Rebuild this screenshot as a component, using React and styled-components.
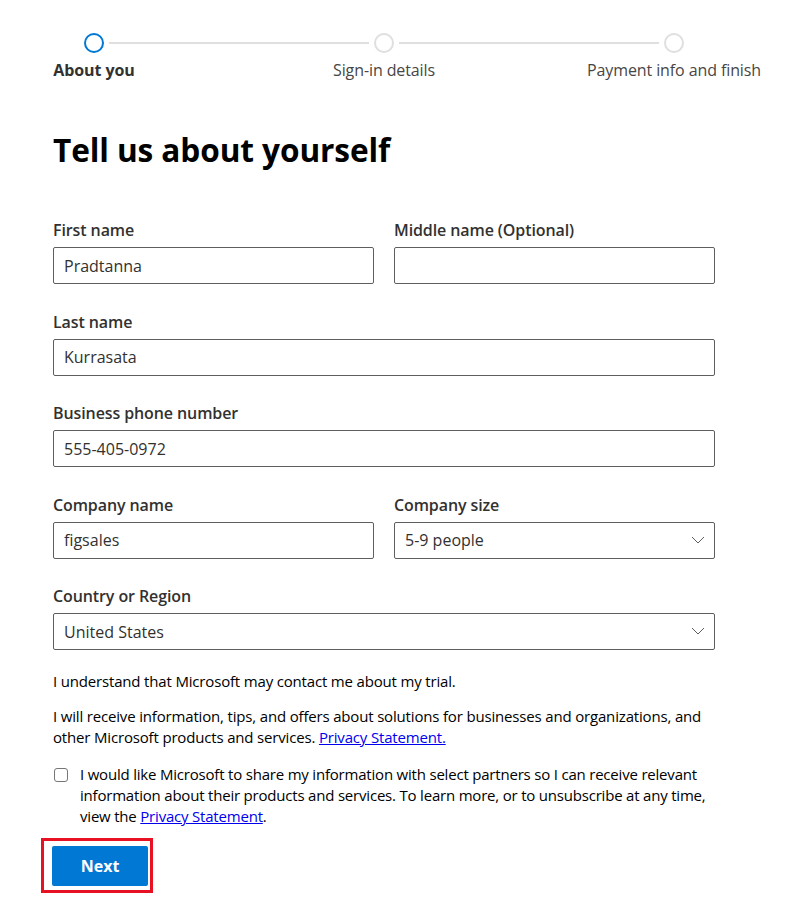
import React, { useState } from 'react';
import styled, { createGlobalStyle } from 'styled-components';

const GlobalStyle = createGlobalStyle`
    html, body {
        margin: 0;
        padding: 0;
        background: #ffffff;
    }
    body {
        font-family: "Segoe UI", "Open Sans", "Noto Sans", sans-serif;
        color: #323130;
    }
`;

const steps = ['About you', 'Sign-in details', 'Payment info and finish'];

function Chevron() {
    return (
        <svg width="14" height="8" viewBox="0 0 14 8" fill="none">
            <path d="M1 1l6 6 6-6" stroke="#605e5c" strokeWidth="1" />
        </svg>
    );
}

function Field({ label, value, select, onChange }) {
    return (
        <FieldWrap>
            <Label>{label}</Label>
            <InputBox>
                <Input value={value} onChange={onChange} readOnly={select} />
                {select && <ChevronSpot><Chevron /></ChevronSpot>}
            </InputBox>
        </FieldWrap>
    );
}

export default function App() {
    const [form, setForm] = useState({
        first: 'Pradtanna',
        middle: '',
        last: 'Kurrasata',
        phone: '555-405-0972',
        company: 'figsales',
    });
    const [share, setShare] = useState(false);

    const update = (key) => (e) => setForm({ ...form, [key]: e.target.value });

    return (
        <Page>
            <GlobalStyle />
            <Stepper>
                {steps.map((s, i) => (
                    <React.Fragment key={s}>
                        <Step>
                            <Circle $active={i === 0} />
                            <StepLabel $active={i === 0}>{s}</StepLabel>
                        </Step>
                        {i < steps.length - 1 && <Connector />}
                    </React.Fragment>
                ))}
            </Stepper>

            <Heading>Tell us about yourself</Heading>

            <Form>
                <Row>
                    <Field label="First name" value={form.first} onChange={update('first')} />
                    <Field label="Middle name (Optional)" value={form.middle} onChange={update('middle')} />
                </Row>
                <Field label="Last name" value={form.last} onChange={update('last')} />
                <Field label="Business phone number" value={form.phone} onChange={update('phone')} />
                <Row>
                    <Field label="Company name" value={form.company} onChange={update('company')} />
                    <Field label="Company size" value="5-9 people" select />
                </Row>
                <Field label="Country or Region" value="United States" select />
            </Form>

            <Notice>I understand that Microsoft may contact me about my trial.</Notice>
            <Notice>
                I will receive information, tips, and offers about solutions for businesses and organizations, and
                other Microsoft products and services. <Link href="#">Privacy Statement.</Link>
            </Notice>
            <CheckRow>
                <Check type="checkbox" checked={share} onChange={() => setShare(!share)} />
                <CheckText>
                    I would like Microsoft to share my information with select partners so I can receive relevant
                    information about their products and services. To learn more, or to unsubscribe at any time,
                    view the <Link href="#">Privacy Statement</Link>.
                </CheckText>
            </CheckRow>

            <Highlight>
                <NextButton>Next</NextButton>
            </Highlight>
        </Page>
    );
}

const Page = styled.div`
    padding: 33px 0 20px 53px;
    width: 662px;
`;

const Stepper = styled.div`
    display: flex;
    margin-left: 31px;
    width: 600px;
`;

const Step = styled.div`
    display: flex;
    flex-direction: column;
    align-items: center;
    width: 20px;
`;

const Circle = styled.div`
    width: 20px;
    height: 20px;
    box-sizing: border-box;
    border-radius: 50%;
    border: 2px solid ${(p) => (p.$active ? '#0078d4' : '#e1dfdd')};
`;

const StepLabel = styled.div`
    margin-top: 6px;
    white-space: nowrap;
    font-size: 16px;
    line-height: 22px;
    letter-spacing: -0.1px;
    font-weight: ${(p) => (p.$active ? 700 : 400)};
    color: ${(p) => (p.$active ? '#323130' : '#484644')};
`;

const Connector = styled.div`
    flex: 1;
    height: 2px;
    margin: 9px 5px 0;
    background: #e1dfdd;
`;

const Heading = styled.h1`
    margin: 49px 0 0;
    font-size: 31.6px;
    line-height: 40px;
    font-weight: 700;
    letter-spacing: -0.1px;
    color: #000000;
`;

const Form = styled.div`
    display: flex;
    flex-direction: column;
    gap: 26.5px;
    margin-top: 49px;
`;

const Row = styled.div`
    display: grid;
    grid-template-columns: 1fr 1fr;
    gap: 20px;
`;

const FieldWrap = styled.div`
    display: flex;
    flex-direction: column;
`;

const Label = styled.label`
    font-size: 16px;
    line-height: 22px;
    font-weight: 600;
    letter-spacing: -0.1px;
    color: #323130;
    margin-bottom: 6px;
`;

const InputBox = styled.div`
    position: relative;
    display: flex;
`;

const Input = styled.input`
    width: 100%;
    height: 37px;
    box-sizing: border-box;
    border: 1px solid #605e5c;
    border-radius: 2px;
    padding: 0 10px;
    font-family: inherit;
    font-size: 16px;
    color: #323130;
    background: #ffffff;
    outline: none;
`;

const ChevronSpot = styled.span`
    position: absolute;
    right: 10px;
    top: 14px;
    display: flex;
    pointer-events: none;
`;

const Notice = styled.p`
    margin: 21px 0 0;
    font-size: 15px;
    line-height: 21px;
    letter-spacing: -0.17px;
    color: #000000;
    & + & {
        margin-top: 14px;
    }
`;

const Link = styled.a`
    color: #0000ee;
    text-decoration: underline;
`;

const CheckRow = styled.div`
    display: flex;
    align-items: flex-start;
    gap: 12px;
    margin-top: 16px;
`;

const Check = styled.input`
    appearance: none;
    flex: none;
    width: 14px;
    height: 14px;
    margin: 4px 0 0 1px;
    border: 1px solid #767676;
    border-radius: 3px;
    background: #fff;
    &:checked {
        background: #0078d4;
        border-color: #0078d4;
    }
`;

const CheckText = styled.p`
    margin: 0;
    font-size: 15px;
    line-height: 21px;
    letter-spacing: -0.2px;
    color: #000000;
`;

const Highlight = styled.div`
    display: inline-flex;
    margin: 11px 0 0 -12px;
    padding: 5px 2px 4px 8px;
    border: 3px solid #e81123;
`;

const NextButton = styled.button`
    width: 96px;
    height: 40px;
    border: none;
    border-radius: 2px;
    background: #0078d4;
    color: #ffffff;
    font-family: inherit;
    font-size: 16px;
    font-weight: 700;
    cursor: pointer;
`;
